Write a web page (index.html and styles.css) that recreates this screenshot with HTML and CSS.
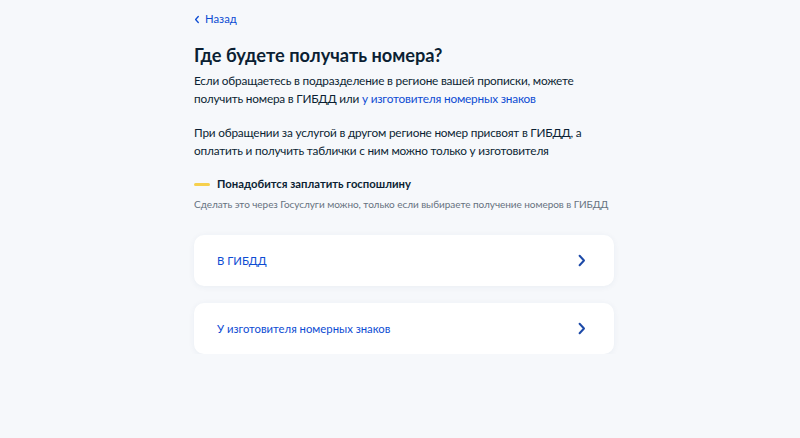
FILE: index.html
```html
<!DOCTYPE html>
<html lang="ru">
<head>
<meta charset="utf-8">
<link rel="stylesheet" href="styles.css">
</head>
<body>
<div class="page">
  <a class="back" href="#"><svg class="back-icon" width="6" height="9" viewBox="0 0 6 9"><path d="M4.3 1.5 L1.6 4.5 L4.3 7.5" fill="none" stroke="#0d4cd3" stroke-width="1.3" stroke-linecap="round" stroke-linejoin="round"/></svg><span>Назад</span></a>
  <h1 class="title">Где будете получать номера?</h1>
  <p class="text">Если обращаетесь в подразделение в регионе вашей прописки, можете получить номера в ГИБДД или <a class="link" href="#">у изготовителя номерных знаков</a></p>
  <p class="text text-second">При обращении за услугой в другом регионе номер присвоят в ГИБДД, а оплатить и получить таблички с ним можно только у изготовителя</p>
  <div class="note">
    <div class="note-head"><span class="note-bar"></span><span class="note-title">Понадобится заплатить госпошлину</span></div>
    <div class="note-sub">Сделать это через Госуслуги можно, только если выбираете получение номеров в ГИБДД</div>
  </div>
  <div class="options">
    <a class="option" href="#"><span>В ГИБДД</span><svg class="chev" width="8" height="13" viewBox="0 0 8 13"><path d="M1.6 1.8 L6 6.5 L1.6 11.2" fill="none" stroke="#1d4aa8" stroke-width="2" stroke-linecap="round" stroke-linejoin="round"/></svg></a>
    <a class="option" href="#"><span>У изготовителя номерных знаков</span><svg class="chev" width="8" height="13" viewBox="0 0 8 13"><path d="M1.6 1.8 L6 6.5 L1.6 11.2" fill="none" stroke="#1d4aa8" stroke-width="2" stroke-linecap="round" stroke-linejoin="round"/></svg></a>
  </div>
</div>
</body>
</html>
```
FILE: styles.css
```css
html, body {
  margin: 0;
  padding: 0;
  background: #f6f8fb;
}
body {
  padding-left: 8px;
  font-family: Lato, "Noto Sans", sans-serif;
  color: #0b1f33;
}
.page {
  width: 420px;
  margin: 0 auto;
  padding-top: 11px;
}
.back {
  display: flex;
  align-items: center;
  gap: 5px;
  color: #0d4cd3;
  text-decoration: none;
  font-size: 11.3px;
  line-height: 16px;
}
.title {
  margin: 16px 0 0;
  font-size: 18.2px;
  line-height: 24px;
  font-weight: 700;
}
.text {
  margin: 5px 0 0;
  font-size: 11.8px;
  letter-spacing: -0.2px;
  line-height: 18px;
}
.text-second {
  margin-top: 16px;
}
.link {
  color: #0d4cd3;
  text-decoration: none;
}
.note {
  margin-top: 16px;
}
.note-head {
  display: flex;
  align-items: center;
  gap: 7px;
}
.note-bar {
  width: 16px;
  height: 3px;
  border-radius: 2px;
  background: #f6d04d;
}
.note-title {
  font-size: 11.3px;
  line-height: 16px;
  font-weight: 700;
}
.note-sub {
  margin-top: 5px;
  font-size: 10px;
  letter-spacing: -0.05px;
  line-height: 14px;
  color: #66727f;
  white-space: nowrap;
}
.options {
  margin-top: 24px;
  display: flex;
  flex-direction: column;
  gap: 17px;
}
.option {
  display: flex;
  align-items: center;
  justify-content: space-between;
  height: 51px;
  padding: 0 28px 0 23px;
  background: #fff;
  border-radius: 10px;
  box-shadow: 0 1px 6px rgba(30, 60, 120, 0.06);
  color: #0d4cd3;
  text-decoration: none;
  font-size: 11.3px;
}
.chev {
  display: block;
}
```
